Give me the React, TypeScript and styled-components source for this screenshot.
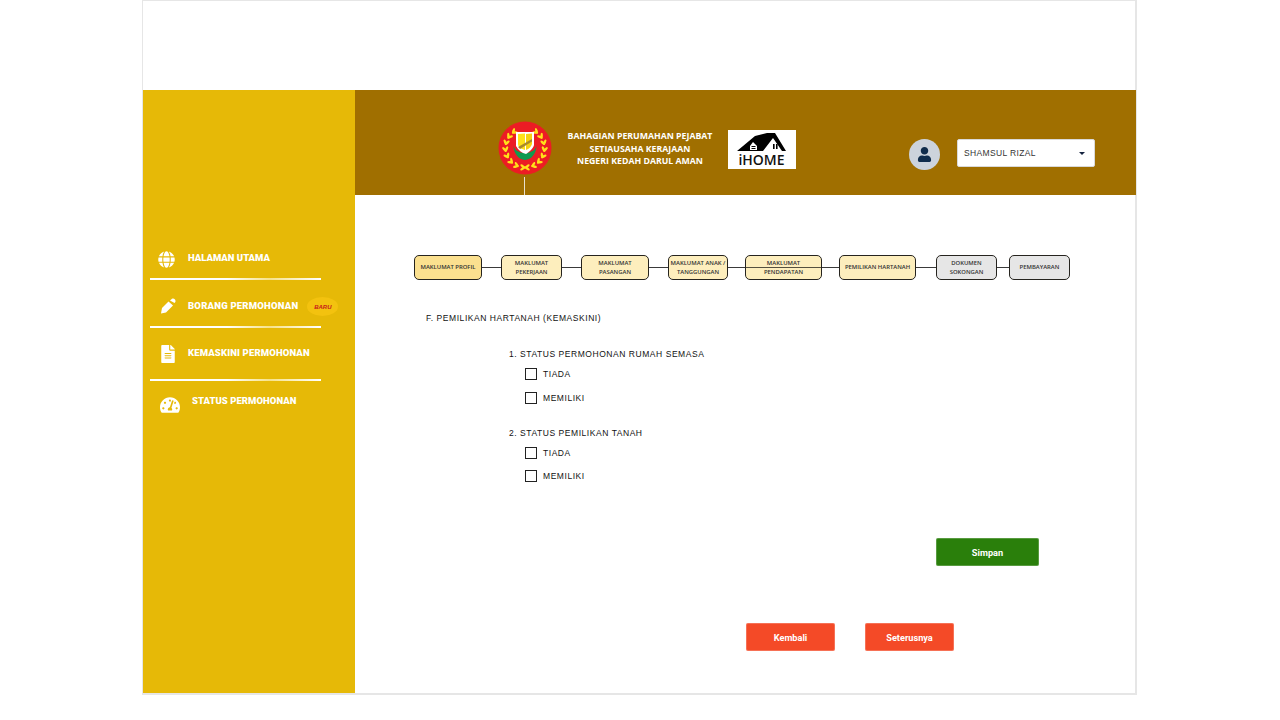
import React from "react";
import styled, { createGlobalStyle } from "styled-components";
import { FaGlobe, FaFileAlt, FaTachometerAlt, FaUser } from "react-icons/fa";

const Global = createGlobalStyle`
  html, body { margin: 0; padding: 0; background: #fff; }
  body { font-family: "Liberation Sans", Arial, sans-serif; overflow: hidden; }
`;

const Frame = styled.div`
  box-sizing: border-box;
  width: 995px;
  height: 695px;
  margin-left: 142px;
  border: 1px solid #e6e6e6;
  border-width: 1px 2px 2px 1px;
  padding-top: 89px;
  display: grid;
  grid-template-columns: 212px 781px;
  background: #fff;
`;

const Sidebar = styled.aside`
  background: #e6b907;
  padding-top: 154px;
  display: flex;
  flex-direction: column;
`;

const NavItem = styled.div<{ $h: number }>`
  height: ${(p) => p.$h}px;
  display: flex;
  align-items: flex-start;
  color: #fff;
`;

const NavIcon = styled.span<{ $left: number; $top: number; $size: number }>`
  display: flex;
  width: ${(p) => p.$size}px;
  height: ${(p) => p.$size}px;
  margin-left: ${(p) => p.$left}px;
  margin-top: ${(p) => p.$top}px;
  font-size: ${(p) => p.$size}px;
  flex: none;
`;

const NavLabel = styled.span<{ $left: number; $top: number; $track?: number }>`
  margin-left: ${(p) => p.$left}px;
  margin-top: ${(p) => p.$top}px;
  font-family: "Roboto", "Liberation Sans", sans-serif;
  font-size: 9.5px;
  line-height: 12px;
  font-weight: 900;
  letter-spacing: ${(p) => p.$track ?? 0}px;
  white-space: nowrap;
`;

const Badge = styled.span`
  margin-left: 9px;
  margin-top: 17px;
  width: 31px;
  height: 19px;
  border-radius: 50%;
  background: #f3c20f;
  color: #c8201a;
  font-family: "Liberation Sans", sans-serif;
  font-size: 6px;
  font-weight: 700;
  font-style: italic;
  display: flex;
  align-items: center;
  justify-content: center;
`;

const NavRule = styled.div`
  height: 2px;
  width: 171px;
  margin-left: 7px;
  background: linear-gradient(90deg, #fff 0%, #fff 45%, #f6e28a 70%, #fff 100%);
  flex: none;
`;

const Main = styled.main`
  display: flex;
  flex-direction: column;
`;

const Header = styled.header`
  height: 105px;
  background: #a06f00;
  display: flex;
  align-items: flex-start;
  position: relative;
`;

const Emblem = styled.svg`
  width: 54px;
  height: 54px;
  margin-left: 143px;
  margin-top: 31px;
  flex: none;
`;

const EmblemStem = styled.div`
  position: absolute;
  left: 169px;
  top: 87px;
  width: 1px;
  height: 18px;
  background: #e8e0cc;
`;

const HeaderTitle = styled.div`
  width: 176px;
  margin-top: 40px;
  color: #fff;
  text-align: center;
  font-family: "Open Sans", sans-serif;
  font-weight: 700;
  font-size: 8.75px;
  line-height: 12.5px;
  white-space: nowrap;
`;

const LogoBox = styled.div`
  width: 68px;
  height: 39px;
  margin-top: 40px;
  background: #fff;
  position: relative;
  flex: none;
  svg { display: block; width: 68px; height: 25px; }
`;

const LogoText = styled.div`
  position: absolute;
  left: 0;
  right: 1px;
  top: 21px;
  text-align: center;
  font-family: "Open Sans", sans-serif;
  font-weight: 600;
  font-size: 14px;
  line-height: 18px;
  color: #111;
`;

const Avatar = styled.div`
  width: 31px;
  height: 31px;
  margin-left: 113px;
  margin-top: 49px;
  border-radius: 50%;
  background: #ccd3dc;
  color: #0f2c4c;
  display: flex;
  align-items: center;
  justify-content: center;
  font-size: 15px;
  flex: none;
`;

const UserSelect = styled.div`
  box-sizing: border-box;
  width: 138px;
  height: 28px;
  margin-left: 17px;
  margin-top: 49px;
  background: #fff;
  border: 1px solid #d9d9d9;
  border-radius: 2px;
  display: flex;
  align-items: center;
  justify-content: space-between;
  padding: 0 9px 0 6px;
  font-family: "Liberation Sans", sans-serif;
  font-size: 8.5px;
  letter-spacing: 0.35px;
  color: #333;
  flex: none;
`;

const Caret = styled.span`
  width: 0;
  height: 0;
  border-left: 3px solid transparent;
  border-right: 3px solid transparent;
  border-top: 3px solid #14233f;
`;

const Content = styled.div`
  flex: 1;
  display: flex;
  flex-direction: column;
  padding: 60px 0 0 59px;
`;

const Steps = styled.div`
  display: flex;
  align-items: center;
  height: 25px;
`;

const Step = styled.div<{ $w: number; $bg: string; $strike?: boolean }>`
  box-sizing: border-box;
  position: relative;
  width: ${(p) => p.$w}px;
  height: 25px;
  flex: none;
  background: ${(p) => p.$bg};
  border: 1px solid #26241f;
  border-radius: 5px;
  display: flex;
  align-items: center;
  justify-content: center;
  text-align: center;
  font-family: "Open Sans", sans-serif;
  font-weight: 600;
  font-size: 5.9px;
  line-height: 8.5px;
  color: #333;
  white-space: nowrap;
  ${(p) =>
    p.$strike
      ? `&::after { content: ""; position: absolute; left: 0; right: 0; top: 11px; height: 1px; background: #55503f; }`
      : ""}
`;

const Connector = styled.div<{ $w: number }>`
  width: ${(p) => p.$w}px;
  height: 1px;
  background: #3a3a3a;
  flex: none;
`;

const Form = styled.div`
  font-family: "Liberation Sans", sans-serif;
  font-size: 8.5px;
  color: #111;
  letter-spacing: 0.55px;
`;

const FormTitle = styled.div`
  margin: 32px 0 0 12px;
  line-height: 12px;
`;

const Section = styled.div<{ $top: number }>`
  margin: ${(p) => p.$top}px 0 0 95px;
`;

const Question = styled.div`
  line-height: 12px;
`;

const Option = styled.label<{ $top: number }>`
  display: flex;
  align-items: center;
  height: 12px;
  margin: ${(p) => p.$top}px 0 0 16px;
  gap: 6px;
`;

const Box = styled.span`
  box-sizing: border-box;
  width: 12px;
  height: 12px;
  border: 1.5px solid #222;
  flex: none;
`;

const Action = styled.button<{ $bg: string; $w: number }>`
  width: ${(p) => p.$w}px;
  height: 28px;
  padding: 0;
  border: 0;
  border-radius: 2px;
  background: ${(p) => p.$bg};
  box-shadow: inset 0 0 0 1px rgba(255, 255, 255, 0.22);
  color: #fff;
  font-family: "Roboto", "Liberation Sans", sans-serif;
  font-weight: 700;
  font-size: 9.2px;
  flex: none;
`;

const SaveRow = styled.div`
  margin: 56px 0 0 522px;
`;

const NavRow = styled.div`
  display: flex;
  gap: 30px;
  margin: 57px 0 0 332px;
`;

const Wreath = () => {
  const leaves: React.ReactNode[] = [];
  const r = 19.5;
  for (let i = 0; i < 8; i++) {
    const deg = -52 + i * 20;
    const t = (deg * Math.PI) / 180;
    [1, -1].forEach((s) => {
      const x = 27 + s * r * Math.cos(t);
      const y = 27 + r * Math.sin(t);
      const tangent = s * (deg + 90);
      [35, -35].forEach((off) => {
        const rot = tangent + off;
        const cx = x + 1.8 * Math.cos((rot * Math.PI) / 180) * (s > 0 ? -1 : 1);
        const cy = y + 1.8 * Math.sin((rot * Math.PI) / 180) * (s > 0 ? -1 : 1);
        leaves.push(
          <ellipse
            key={`${i}${s}${off}`}
            cx={cx}
            cy={cy}
            rx="3"
            ry="1.250"
            fill="#ffe11a"
            transform={`rotate(${rot} ${cx} ${cy})`}
          />
        );
      });
    });
  }
  return <>{leaves}</>;
};

const PenIcon = () => (
  <svg viewBox="0 0 16 16" width="16" height="16" fill="#fff">
    <path d="M1 15.500 L2 10 L8.500 3.500 L13 7.500 L6 14.500 Z" />
    <path d="M10 2.500 L12 0.800 C13.500 0 15.500 1 15.500 3 C15.500 4 15 4.500 14.500 5 Z" />
  </svg>
);

const steps = [
  { w: 68, bg: "#fbe08f", t: ["MAKLUMAT PROFIL"], gap: 19 },
  { w: 61, bg: "#fdeebd", t: ["MAKLUMAT", "PEKERJAAN"], gap: 19 },
  { w: 68, bg: "#fdeebd", t: ["MAKLUMAT", "PASANGAN"], gap: 19 },
  { w: 60, bg: "#fdeebd", t: ["MAKLUMAT ANAK /", "TANGGUNGAN"], gap: 17 },
  { w: 77, bg: "#fdeebd", t: ["MAKLUMAT", "PENDAPATAN"], gap: 17, strike: true },
  { w: 77, bg: "#fdeebd", t: ["PEMILIKAN HARTANAH"], gap: 20 },
  { w: 61, bg: "#e6e6e6", t: ["DOKUMEN", "SOKONGAN"], gap: 12 },
  { w: 61, bg: "#e6e6e6", t: ["PEMBAYARAN"], gap: 0 },
];

export default function App() {
  return (
    <>
      <Global />
      <Frame>
        <Sidebar>
          <NavItem $h={34}>
            <NavIcon $left={15} $top={7} $size={17}><FaGlobe /></NavIcon>
            <NavLabel $left={13} $top={8}>HALAMAN UTAMA</NavLabel>
          </NavItem>
          <NavRule />
          <NavItem $h={46}>
            <NavIcon $left={17} $top={18} $size={16}><PenIcon /></NavIcon>
            <NavLabel $left={12} $top={20} $track={0.22}>BORANG PERMOHONAN</NavLabel>
            <Badge>BARU</Badge>
          </NavItem>
          <NavRule />
          <NavItem $h={51}>
            <NavIcon $left={16} $top={17} $size={18}><FaFileAlt /></NavIcon>
            <NavLabel $left={11} $top={19} $track={0.15}>KEMASKINI PERMOHONAN</NavLabel>
          </NavItem>
          <NavRule />
          <NavItem $h={40}>
            <NavIcon $left={17} $top={14} $size={20}><FaTachometerAlt /></NavIcon>
            <NavLabel $left={12} $top={14} $track={0.05}>STATUS PERMOHONAN</NavLabel>
          </NavItem>
        </Sidebar>
        <Main>
          <Header>
            <Emblem viewBox="0 0 54 54">
              <circle cx="27" cy="27" r="26.500" fill="#ec1c24" />
              <Wreath />
              <path d="M15.500 24 A11.500 15 0 0 0 38.500 24 A11.500 8 0 0 1 15.500 24 Z" fill="#0f9a4f" />
              <path d="M18 11 L36 11 L36 24 C35 28 31 31 28 33 C24 32 20 29 18 25 Z" fill="#fff" />
              <path d="M20 13 L27 12.500 L27 29 C23 28 20 26 20 23 Z" fill="#ffe11a" />
              <path d="M28 13 L34 12.500 L34 23 C33 26 31 28 28 29 Z" fill="#f6d10f" />
              <path d="M20 26 L34 18 L34 20.500 L22 28 Z" fill="#a9892a" />
            </Emblem>
            <EmblemStem />
            <HeaderTitle>
              BAHAGIAN PERUMAHAN PEJABAT
              <br />
              SETIAUSAHA KERAJAAN
              <br />
              NEGERI KEDAH DARUL AMAN
            </HeaderTitle>
            <LogoBox>
              <svg viewBox="0 0 68 25">
                <path d="M9 21 L27 6 L39 3 L47 3 L58 21 L54 21 L45 8 L35 21 Z" fill="#000" />
                <path d="M25 12 L29 16 L29 20 L22 20 L22 16 Z" fill="#fff" />
                <rect x="23.500" y="16" width="4" height="1" fill="#000" />
                <rect x="23.500" y="18" width="4" height="1" fill="#000" />
                <rect x="45" y="14" width="1.600" height="5" fill="#000" />
                <rect x="48" y="14" width="1.600" height="5" fill="#000" />
              </svg>
              <LogoText>iHOME</LogoText>
            </LogoBox>
            <Avatar><FaUser /></Avatar>
            <UserSelect>
              SHAMSUL RIZAL
              <Caret />
            </UserSelect>
          </Header>
          <Content>
            <Steps>
              {steps.map((s, i) => (
                <React.Fragment key={i}>
                  <Step $w={s.w} $bg={s.bg} $strike={s.strike}>
                    <span>
                      {s.t.map((l, j) => (
                        <React.Fragment key={j}>
                          {j > 0 && <br />}
                          {l}
                        </React.Fragment>
                      ))}
                    </span>
                  </Step>
                  {s.gap > 0 && <Connector $w={s.gap} />}
                </React.Fragment>
              ))}
            </Steps>
            <Form>
              <FormTitle>F. PEMILIKAN HARTANAH (KEMASKINI)</FormTitle>
              <Section $top={24}>
                <Question>1. STATUS PERMOHONAN RUMAH SEMASA</Question>
                <Option $top={8}><Box />TIADA</Option>
                <Option $top={12}><Box />MEMILIKI</Option>
              </Section>
              <Section $top={23}>
                <Question>2. STATUS PEMILIKAN TANAH</Question>
                <Option $top={8}><Box />TIADA</Option>
                <Option $top={11}><Box />MEMILIKI</Option>
              </Section>
            </Form>
            <SaveRow><Action $bg="#2a7f0b" $w={103}>Simpan</Action></SaveRow>
            <NavRow>
              <Action $bg="#f44a27" $w={89}>Kembali</Action>
              <Action $bg="#f44a27" $w={89}>Seterusnya</Action>
            </NavRow>
          </Content>
        </Main>
      </Frame>
    </>
  );
}
